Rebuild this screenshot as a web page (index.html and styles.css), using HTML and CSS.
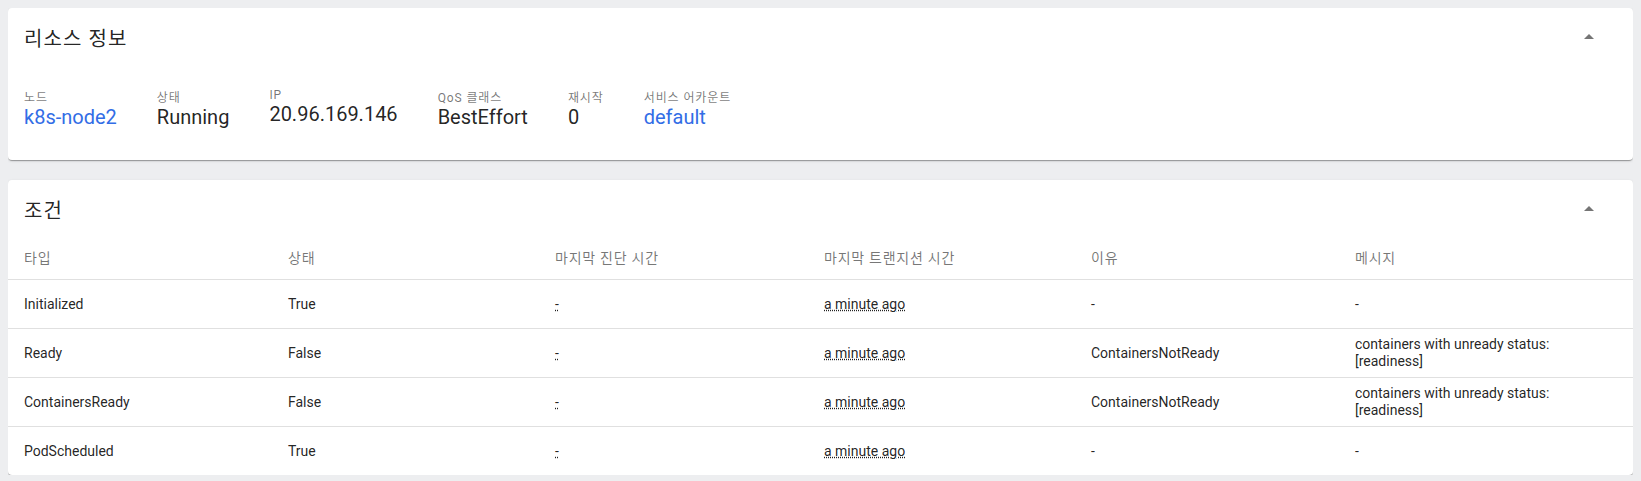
FILE: index.html
```html
<!DOCTYPE html>
<html lang="ko">
<head>
<meta charset="utf-8">
<title>리소스 정보</title>
<link rel="stylesheet" href="styles.css">
</head>
<body>
<main class="page">
  <section class="card">
    <header class="card-header">
      <h2 class="card-title">리소스 정보</h2>
      <button class="toggle" type="button" aria-label="접기">
        <svg viewBox="0 0 24 24"><path d="M7 14l5-5 5 5z"/></svg>
      </button>
    </header>
    <div class="meta">
      <div class="meta-item">
        <div class="meta-label">노드</div>
        <a class="meta-value link" href="#">k8s-node2</a>
      </div>
      <div class="meta-item">
        <div class="meta-label">상태</div>
        <div class="meta-value">Running</div>
      </div>
      <div class="meta-item">
        <div class="meta-label">IP</div>
        <div class="meta-value">20.96.169.146</div>
      </div>
      <div class="meta-item">
        <div class="meta-label">QoS 클래스</div>
        <div class="meta-value">BestEffort</div>
      </div>
      <div class="meta-item">
        <div class="meta-label">재시작</div>
        <div class="meta-value">0</div>
      </div>
      <div class="meta-item">
        <div class="meta-label">서비스 어카운트</div>
        <a class="meta-value link" href="#">default</a>
      </div>
    </div>
  </section>

  <section class="card">
    <header class="card-header">
      <h2 class="card-title">조건</h2>
      <button class="toggle" type="button" aria-label="접기">
        <svg viewBox="0 0 24 24"><path d="M7 14l5-5 5 5z"/></svg>
      </button>
    </header>
    <div class="table">
      <div class="row head">
        <div class="cell">타입</div>
        <div class="cell">상태</div>
        <div class="cell">마지막 진단 시간</div>
        <div class="cell">마지막 트랜지션 시간</div>
        <div class="cell">이유</div>
        <div class="cell">메시지</div>
      </div>
      <div class="row">
        <div class="cell">Initialized</div>
        <div class="cell">True</div>
        <div class="cell"><span class="dotted">-</span></div>
        <div class="cell"><span class="dotted">a minute ago</span></div>
        <div class="cell">-</div>
        <div class="cell">-</div>
      </div>
      <div class="row">
        <div class="cell">Ready</div>
        <div class="cell">False</div>
        <div class="cell"><span class="dotted">-</span></div>
        <div class="cell"><span class="dotted">a minute ago</span></div>
        <div class="cell">ContainersNotReady</div>
        <div class="cell">containers with unready status: [readiness]</div>
      </div>
      <div class="row">
        <div class="cell">ContainersReady</div>
        <div class="cell">False</div>
        <div class="cell"><span class="dotted">-</span></div>
        <div class="cell"><span class="dotted">a minute ago</span></div>
        <div class="cell">ContainersNotReady</div>
        <div class="cell">containers with unready status: [readiness]</div>
      </div>
      <div class="row">
        <div class="cell">PodScheduled</div>
        <div class="cell">True</div>
        <div class="cell"><span class="dotted">-</span></div>
        <div class="cell"><span class="dotted">a minute ago</span></div>
        <div class="cell">-</div>
        <div class="cell">-</div>
      </div>
    </div>
  </section>
</main>
</body>
</html>
```

FILE: styles.css
```css
body {
  margin: 8px;
  background: #edeef0;
  font-family: Roboto, "Noto Sans CJK KR", sans-serif;
  color: rgba(0, 0, 0, 0.87);
}

.card {
  background: #fff;
  border-radius: 4px;
  box-shadow: 0 2px 1px -1px rgba(0, 0, 0, 0.2), 0 1px 1px 0 rgba(0, 0, 0, 0.14), 0 1px 3px 0 rgba(0, 0, 0, 0.12);
}

.card + .card {
  margin-top: 20px;
}

.card-header {
  display: flex;
  align-items: center;
  justify-content: space-between;
  height: 58px;
  padding: 0 32px 0 16px;
  box-sizing: border-box;
}

.card-title {
  margin: 0;
  font-size: 20px;
  font-weight: 400;
  letter-spacing: 1.1px;
  color: rgba(0, 0, 0, 0.87);
}

.toggle {
  width: 24px;
  height: 24px;
  padding: 0;
  border: 0;
  background: none;
  display: flex;
  cursor: pointer;
}

.toggle svg {
  width: 24px;
  height: 24px;
  fill: #757575;
}

.meta {
  display: flex;
  align-items: flex-start;
  gap: 40px;
  padding: 22px 16px 31px;
}

.meta-item {
  display: flex;
  flex-direction: column;
}

.meta-label {
  font-size: 12px;
  letter-spacing: 0.9px;
  color: rgba(0, 0, 0, 0.54);
}

.meta-value {
  font-size: 20px;
  color: rgba(0, 0, 0, 0.87);
}

.link {
  color: #326de6;
  text-decoration: none;
}

.row {
  display: grid;
  grid-template-columns: 264px 267px 269px 267px 264px 1fr;
  align-items: center;
  min-height: 48px;
  padding: 0 24px 0 16px;
  border-bottom: 1px solid #e0e0e0;
  font-size: 14px;
  line-height: 17px;
}

.row:last-child {
  border-bottom: 0;
}

.row.head {
  min-height: 41px;
  letter-spacing: 0.75px;
  color: rgba(0, 0, 0, 0.54);
}

.dotted {
  text-decoration: underline dotted;
}
```
